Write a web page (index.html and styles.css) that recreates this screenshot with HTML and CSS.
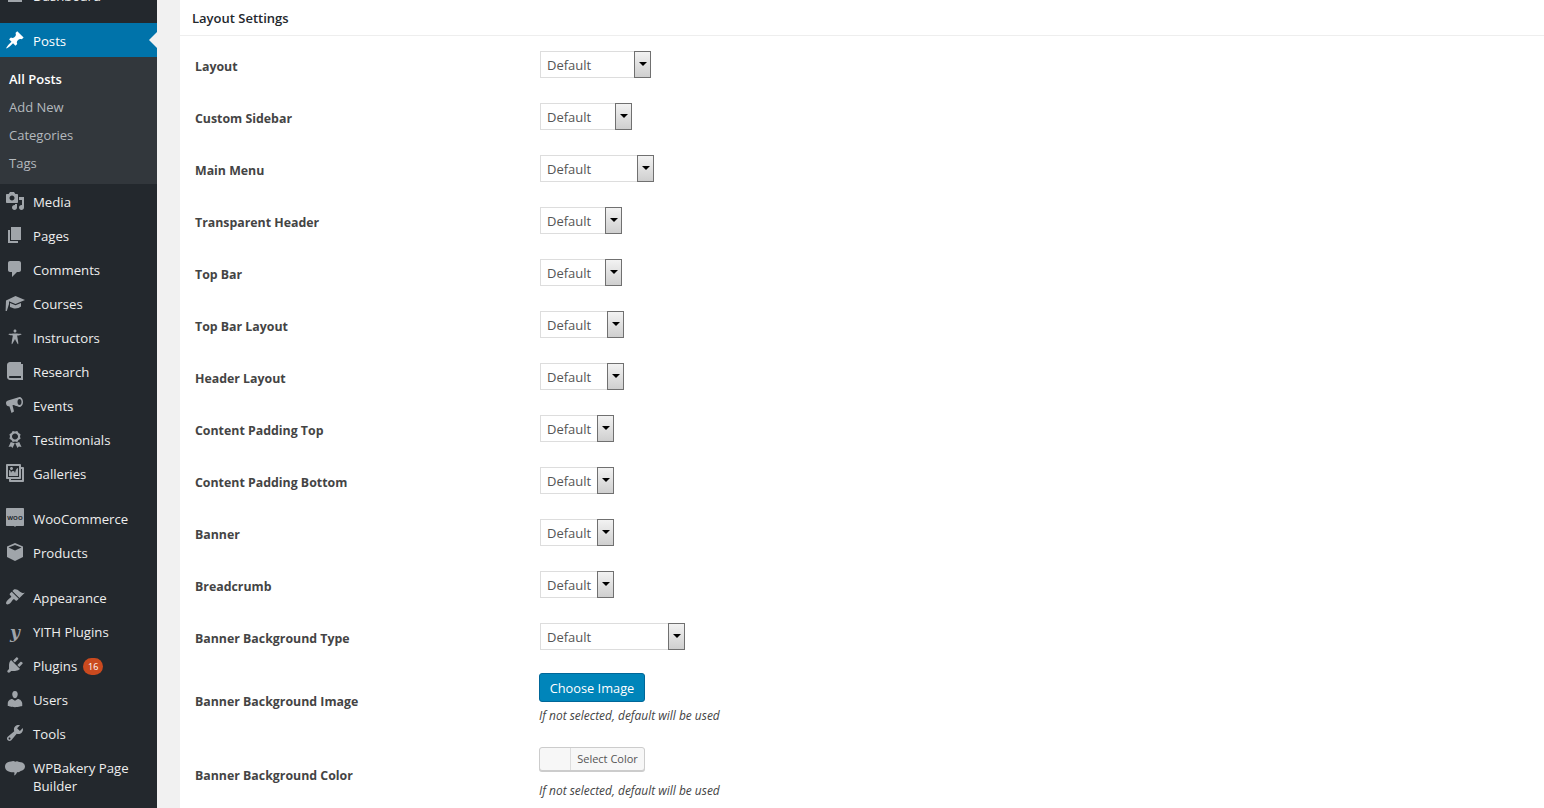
FILE: index.html
```html
<!DOCTYPE html>
<html>
<head>
  <meta charset="utf-8">
  <link rel="stylesheet" href="styles.css">
</head>
<body>
  <div class="page">
    <div class="sidebar">
      <ul class="menu">
        <li class="item">
          <svg class="icon" viewBox="0 0 20 20"><path d="M3 3h14v14H3z"/></svg>
          <span>Dashboard</span>
        </li>
        <li class="item current sep">
          <svg class="icon" viewBox="0 0 20 20"><path d="M10.44 3.02l1.82-1.82 6.36 6.35-1.83 1.82c-1.05-.68-2.48-.57-3.41.36l-.75.75c-.92.93-1.04 2.35-.35 3.41l-1.83 1.82-2.41-2.41-2.8 2.79c-.42.42-3.38 2.71-3.8 2.29s1.86-3.39 2.28-3.81l2.79-2.79L4.1 9.36l1.83-1.82c1.05.69 2.48.57 3.41-.36l.75-.75c.93-.92 1.04-2.35.35-3.41z"/></svg>
          <span>Posts</span>
        </li>
        <li class="submenu">
          <a class="sub active">All Posts</a>
          <a class="sub">Add New</a>
          <a class="sub">Categories</a>
          <a class="sub">Tags</a>
        </li>
        <li class="item">
          <svg class="icon" viewBox="0 0 20 20"><path d="M13 11V4c0-.55-.45-1-1-1h-1.67L9 1H5L3.67 3H2c-.55 0-1 .45-1 1v7c0 .55.45 1 1 1h10c.55 0 1-.45 1-1zM7 4.5c1.38 0 2.5 1.12 2.5 2.5S8.38 9.5 7 9.5 4.5 8.38 4.5 7 5.62 4.5 7 4.5zM14 6h5v10.5c0 1.38-1.12 2.5-2.5 2.5S14 17.88 14 16.5s1.12-2.5 2.5-2.5c.17 0 .34.02.5.05V9h-3V6zm-4 8.05V13h2v3.5c0 1.38-1.12 2.5-2.5 2.5S7 17.88 7 16.5 8.12 14 9.5 14c.17 0 .34.02.5.05z"/></svg>
          <span>Media</span>
        </li>
        <li class="item">
          <svg class="icon" viewBox="0 0 20 20"><path d="M6 15V2h10v13H6zm-1 1h8v2H3V5h2v11z"/></svg>
          <span>Pages</span>
        </li>
        <li class="item">
          <svg class="icon" viewBox="0 0 20 20"><path d="M5 2h9c1.1 0 2 .9 2 2v7c0 1.1-.9 2-2 2h-2l-5 5v-5H5c-1.1 0-2-.9-2-2V4c0-1.1.9-2 2-2z"/></svg>
          <span>Comments</span>
        </li>
        <li class="item">
          <svg class="icon" viewBox="0 0 20 20"><path d="M10.500 3L20 7l-9.500 4L4 8.300V11L1.800 18H.6L1 7.500zM5 10l5.500 2.300L16 10v3.500c-1.500 1.300-3.500 2-5.500 2s-3.500-.7-5.500-1.500z"/></svg>
          <span>Courses</span>
        </li>
        <li class="item">
          <svg class="icon" viewBox="0 0 20 20"><path d="M10 2.600c.83 0 1.500.67 1.500 1.500s-.67 1.510-1.500 1.510c-.82 0-1.500-.68-1.500-1.510s.68-1.500 1.500-1.500zM3.400 7.360c0-.65 6.600-.76 6.600-.76s6.600.11 6.600.76-4.470 1.400-4.470 1.400 1.690 8.140 1.060 8.380c-.62.24-3.190-5.190-3.190-5.190s-2.560 5.430-3.190 5.190c-.62-.24 1.060-8.380 1.060-8.380S3.400 8.010 3.400 7.360z"/></svg>
          <span>Instructors</span>
        </li>
        <li class="item">
          <svg class="icon" viewBox="0 0 20 20"><path d="M16 3h2v16H5c-1.660 0-3-1.340-3-3V4c0-1.660 1.340-3 3-3h11v14H5c-.55 0-1 .45-1 1s.45 1 1 1h11z"/></svg>
          <span>Research</span>
        </li>
        <li class="item">
          <svg class="icon" viewBox="0 0 20 20"><path d="M14.500 2c2 0 3.500 2.400 3.500 5s-1.500 5-3.500 5c-.4 0-6-2-6-2l-1 .2L9 16.500 6.500 18 4.500 11.500 2.500 11C1.500 10.500 1 9 1 8s.5-2 2-2.500zM14.500 4C13.300 4 12.500 5.300 12.500 7s.8 3 2 3 2-1.300 2-3-.8-3-2-3z" fill-rule="evenodd"/></svg>
          <span>Events</span>
        </li>
        <li class="item">
          <svg class="icon" viewBox="0 0 20 20"><path d="M4.460 5.160L5 7.460l-.54 2.290 2.010 1.240L7.700 13l2.300-.54 2.300.54 1.230-2.010 2.010-1.240L15 7.460l.54-2.300-2-1.240-1.240-2.010-2.300.55-2.290-.54-1.250 2zm5.550 5.340c-1.660 0-3.010-1.340-3.010-3s1.350-3 3.010-3 3 1.340 3 3-1.340 3-3 3zM5.800 13l-2.300 5 2.600-.6L7.500 19l2.300-4.700zM14.200 13l2.300 5-2.600-.6-1.400 1.600-2.300-4.700z"/></svg>
          <span>Testimonials</span>
        </li>
        <li class="item">
          <svg class="icon" viewBox="0 0 20 20"><path d="M16 4h1.960c.57 0 1.040.47 1.040 1.040v12.920c0 .57-.47 1.040-1.040 1.040H5.040C4.470 19 4 18.530 4 17.960V16H2.040C1.470 16 1 15.530 1 14.960V2.040C1 1.470 1.470 1 2.040 1h12.920c.57 0 1.040.47 1.040 1.040V4zM3 14h11V3H3v11zm5-8.500C8 4.670 7.330 4 6.500 4S5 4.670 5 5.500 5.670 7 6.500 7 8 6.330 8 5.500zm2 4.500s1-5 3-5v8H4V7c2 0 2 3 2 3s.33-2 2-2 2 2 2 2zm7 7V6h-1v8.960c0 .57-.47 1.040-1.040 1.040H6v1h11z"/></svg>
          <span>Galleries</span>
        </li>
        <li class="item sep">
          <svg class="icon" viewBox="0 0 20 20"><path d="M2 0h16c.6 0 1 .4 1 1v16c0 .6-.4 1-1 1h-7l-1 1-1-1H2c-.6 0-1-.4-1-1V1c0-.6.4-1 1-1z"/><text class="woo" x="10" y="11.500" text-anchor="middle">WOO</text></svg>
          <span>WooCommerce</span>
        </li>
        <li class="item">
          <svg class="icon" viewBox="0 0 20 20"><path d="M10 1l8 3.500v10.500L10 19l-8-4V4.500zM3.500 5.500L10 8.500l6.500-3L10 3z" fill-rule="evenodd"/></svg>
          <span>Products</span>
        </li>
        <li class="item sep">
          <svg class="icon" viewBox="0 0 20 20"><path d="M14.480 11.060L7.410 3.990l1.500-1.500c.5-.56 2.300-.47 3.510.32 1.210.8 1.430 1.280 2.910 2.100 1.180.64 2.450 1.260 4.450.85zm-.71.71L6.700 4.700 4.930 6.470c-.39.39-.39 1.020 0 1.410l1.060 1.060c.39.39.39 1.030 0 1.420-.6.6-1.430 1.110-2.210 1.690-.35.26-.7.53-1.010.84C1.430 14.230.4 16.080 1.400 17.070c.99 1 2.840-.03 4.180-1.360.31-.31.58-.66.85-1.020.57-.78 1.080-1.610 1.690-2.210.39-.39 1.020-.39 1.410 0l1.060 1.060c.39.39 1.020.39 1.410 0z"/></svg>
          <span>Appearance</span>
        </li>
        <li class="item">
          <span class="yith">y</span>
          <span>YITH Plugins</span>
        </li>
        <li class="item">
          <svg class="icon" viewBox="0 0 20 20"><path d="M13.110 4.360L9.870 7.600 8 5.730l3.240-3.240c.35-.34 1.050-.2 1.560.32.52.51.66 1.210.31 1.550zm-8 1.770l.91-1.120 9.010 9.010-1.190.84c-.71.71-2.630 1.160-3.820 1.160H6.140L4.900 17.260c-.59.59-1.540.59-2.120 0-.59-.58-.59-1.530 0-2.120l1.240-1.240v-3.880c0-1.130.4-3.190 1.090-3.890zm7.260 3.970l3.240-3.240c.34-.35 1.040-.21 1.550.31.52.51.66 1.210.31 1.550l-3.240 3.250z"/></svg>
          <span>Plugins</span>
          <span class="badge">16</span>
        </li>
        <li class="item">
          <svg class="icon" viewBox="0 0 20 20"><path d="M10 9.250c-2.270 0-2.730-3.440-2.730-3.440C7 4.020 7.820 2 9.970 2c2.160 0 2.980 2.020 2.710 3.810 0 0-.41 3.440-2.680 3.440zm0 2.570L12.720 10c2.390 0 4.520 2.330 4.520 4.530v2.490s-3.650 1.130-7.240 1.130c-3.650 0-7.240-1.130-7.240-1.130v-2.490c0-2.250 1.940-4.480 4.470-4.480z"/></svg>
          <span>Users</span>
        </li>
        <li class="item">
          <svg class="icon" viewBox="0 0 20 20"><path d="M16.680 9.770c-1.340 1.340-3.300 1.670-4.950.99l-5.410 6.520c-.99.99-2.590.99-3.580 0s-.99-2.590 0-3.570l6.520-5.420c-.68-1.650-.35-3.610.99-4.950 1.280-1.280 3.120-1.620 4.720-1.060l-2.890 2.890 2.820 2.820 2.860-2.870c.53 1.580.18 3.390-1.080 4.650zM3.810 16.210c.4.39 1.040.39 1.430 0 .4-.4.4-1.040 0-1.430-.39-.4-1.030-.4-1.430 0-.39.39-.39 1.030 0 1.430z"/></svg>
          <span>Tools</span>
        </li>
        <li class="item tall">
          <svg class="icon" viewBox="0 0 20 20"><path d="M6 2.500c1.500-.8 3-.8 4.200.2 1-.7 2.800-.7 3.800.3 3.200-.3 6 1.700 6 4.500 0 2.500-2 4.300-4.500 4.500-.7 1-2 1.500-3.200 1-.7 1.500-1.800 3-3.300 3.500.5-1 .6-2.200.2-3.300C5 13.500 0 12 0 7.500 0 4.500 2.500 2.500 6 2.500z"/></svg>
          <span>WPBakery Page Builder</span>
        </li>
      </ul>
    </div>

    <div class="gutter"></div>

    <div class="content">
      <h2 class="title">Layout Settings</h2>
      <div class="fields">
        <div class="row">
          <label class="label">Layout</label>
          <div class="select w111"><span>Default</span><i class="arrow"></i></div>
        </div>
        <div class="row">
          <label class="label">Custom Sidebar</label>
          <div class="select w92"><span>Default</span><i class="arrow"></i></div>
        </div>
        <div class="row">
          <label class="label">Main Menu</label>
          <div class="select w114"><span>Default</span><i class="arrow"></i></div>
        </div>
        <div class="row">
          <label class="label">Transparent Header</label>
          <div class="select w82"><span>Default</span><i class="arrow"></i></div>
        </div>
        <div class="row">
          <label class="label">Top Bar</label>
          <div class="select w82"><span>Default</span><i class="arrow"></i></div>
        </div>
        <div class="row">
          <label class="label">Top Bar Layout</label>
          <div class="select w84"><span>Default</span><i class="arrow"></i></div>
        </div>
        <div class="row">
          <label class="label">Header Layout</label>
          <div class="select w84"><span>Default</span><i class="arrow"></i></div>
        </div>
        <div class="row">
          <label class="label">Content Padding Top</label>
          <div class="select w74"><span>Default</span><i class="arrow"></i></div>
        </div>
        <div class="row">
          <label class="label">Content Padding Bottom</label>
          <div class="select w74"><span>Default</span><i class="arrow"></i></div>
        </div>
        <div class="row">
          <label class="label">Banner</label>
          <div class="select w74"><span>Default</span><i class="arrow"></i></div>
        </div>
        <div class="row">
          <label class="label">Breadcrumb</label>
          <div class="select w74"><span>Default</span><i class="arrow"></i></div>
        </div>
        <div class="row">
          <label class="label">Banner Background Type</label>
          <div class="select w145"><span>Default</span><i class="arrow"></i></div>
        </div>
        <div class="row row-image">
          <label class="label">Banner Background Image</label>
          <div class="stack">
            <button class="primary">Choose Image</button>
            <p class="note">If not selected, default will be used</p>
          </div>
        </div>
        <div class="row row-color">
          <label class="label">Banner Background Color</label>
          <div class="stack">
            <button class="color"><i class="swatch"></i><span>Select Color</span></button>
            <p class="note">If not selected, default will be used</p>
          </div>
        </div>
      </div>
    </div>
  </div>
</body>
</html>
```

FILE: styles.css
```css
* {
  box-sizing: border-box;
}

html, body {
  margin: 0;
  height: 808px;
  overflow: hidden;
}

body {
  font-family: "Open Sans", "Noto Sans", sans-serif;
  background-color: #f1f1f1;
  color: #444;
}

.page {
  display: flex;
  height: 808px;
  overflow: hidden;
}

/* sidebar */
.sidebar {
  width: 157px;
  flex: none;
  background-color: #23282d;
  overflow: hidden;
}

.menu {
  list-style: none;
  margin: -22px 0 0;
  padding: 0;
}

.item {
  position: relative;
  display: flex;
  align-items: center;
  height: 34px;
  padding-left: 5px;
  font-size: 13.200px;
  color: #eee;
}

.item span {
  margin-top: 2px;
}

.item.sep {
  margin-top: 11px;
}

.item.tall {
  align-items: flex-start;
  height: 52px;
  padding-top: 9px;
  line-height: 18px;
}

.item.tall span {
  margin-top: 0;
  padding-right: 10px;
}

.icon {
  width: 20px;
  height: 20px;
  flex: none;
  margin-right: 8px;
  fill: #a0a5aa;
}

.woo {
  font-family: "Open Sans", sans-serif;
  font-size: 6px;
  font-weight: 700;
  fill: #23282d;
}

.yith {
  width: 20px;
  margin-right: 8px;
  flex: none;
  text-align: center;
  font-family: "DejaVu Serif", serif;
  font-size: 17px;
  font-weight: bold;
  font-style: italic;
  color: #a0a5aa;
  line-height: 20px;
}

.current {
  background-color: #0073aa;
  color: #fff;
}

.current .icon {
  fill: #fff;
}

.current::after {
  content: "";
  position: absolute;
  right: 0;
  top: 9px;
  border: 8px solid transparent;
  border-right-color: #f1f1f1;
}

.submenu {
  display: flex;
  flex-direction: column;
  height: 127px;
  padding-top: 8px;
  background-color: #32373c;
}

.sub {
  height: 28px;
  line-height: 28px;
  padding-left: 9px;
  font-size: 13px;
  color: #b4b9be;
}

.sub.active {
  color: #fff;
  font-weight: 600;
}

.badge {
  width: 20px;
  height: 17px;
  margin-left: 6px;
  border-radius: 9px;
  background-color: #ca4a1f;
  color: #fff;
  font-size: 9px;
  line-height: 17px;
  text-align: center;
}

.gutter {
  width: 23px;
  flex: none;
}

/* settings box */
.content {
  flex: 1;
  background-color: #fff;
}

.title {
  height: 36px;
  margin: 0;
  padding: 0 12px;
  border-bottom: 1px solid #eee;
  font-size: 13px;
  font-weight: 600;
  line-height: 37px;
  color: #23282d;
}

.fields {
  padding: 3px 0 0 15px;
}

.row {
  display: flex;
  align-items: center;
  height: 52px;
}

.label {
  width: 345px;
  flex: none;
  padding-top: 2px;
  font-size: 12.350px;
  font-weight: 700;
  color: #444;
}

.select {
  display: flex;
  height: 27px;
  margin-bottom: 1px;
  border: 1px solid #ddd;
  background-color: #fff;
  font-size: 13px;
  color: #555;
}

.select span {
  flex: 1;
  padding-left: 6px;
  line-height: 27px;
}

.arrow {
  position: relative;
  width: 17px;
  margin: -1px -1px -1px 0;
  border: 1px solid #707070;
  background: linear-gradient(#f2f2f2, #cfcfcf);
}

.arrow::after {
  content: "";
  position: absolute;
  left: 4px;
  top: 10px;
  border: 4px solid transparent;
  border-top: 4px solid #000;
  border-bottom: 0;
}

.w74 { width: 74px; }
.w82 { width: 82px; }
.w84 { width: 84px; }
.w92 { width: 92px; }
.w111 { width: 111px; }
.w114 { width: 114px; }
.w145 { width: 145px; }

.row-image {
  height: 75px;
  align-items: flex-start;
  padding-top: 10px;
}

.row-image .label {
  padding-top: 20px;
}

.row-color {
  height: 70px;
  align-items: flex-start;
  padding-top: 9px;
}

.row-color .label {
  padding-top: 20px;
}

.stack {
  margin-left: -1px;
  display: flex;
  flex-direction: column;
  align-items: flex-start;
}

.primary {
  height: 29px;
  width: 106px;
  padding: 0;
  border: 1px solid #006799;
  border-radius: 3px;
  background-color: #0085ba;
  color: #fff;
  font-family: inherit;
  font-size: 12.800px;
}

.color {
  display: flex;
  height: 24px;
  width: 106px;
  padding: 0;
  border: 1px solid #ccc;
  border-radius: 3px;
  background-color: #f7f7f7;
  box-shadow: 0 1px 0 #ccc;
  color: #555;
  font-family: inherit;
  font-size: 11px;
}

.swatch {
  width: 31px;
  height: 100%;
  border-right: 1px solid #ddd;
}

.color span {
  flex: 1;
  line-height: 22px;
  text-align: center;
}

.note {
  margin: 5px 0 0;
  font-size: 11.950px;
  font-style: italic;
  line-height: 18px;
  color: #444;
}

.row-color .note {
  margin-top: 11px;
}
```
